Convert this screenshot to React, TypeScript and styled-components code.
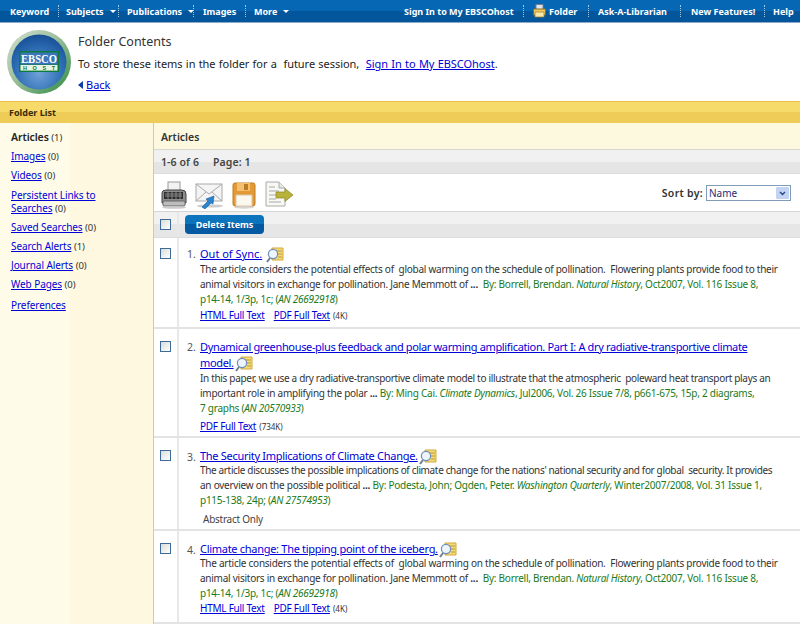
import React from "react";
import styled, { createGlobalStyle } from "styled-components";

const Global = createGlobalStyle`
  html, body { margin: 0; padding: 0; background: #fff; }
  body { font-family: "Noto Sans", "DejaVu Sans", sans-serif; font-size: 10px; color: #333; overflow: hidden; }
  a { color: #0000d8; }
`;

const Page = styled.div`width: 800px; height: 624px; overflow: hidden; display: flex; flex-direction: column;`;

const TopBar = styled.nav`
  height: 23px; flex: none; display: flex; justify-content: space-between; align-items: center;
  background: linear-gradient(#0668b4 0, #0668b4 50%, #04569c 50%, #04569c 100%);
  border-bottom: 1px solid #8fa9c4; box-sizing: border-box;
  padding: 0 6px 0 10px;
`;
const NavGroup = styled.div`display: flex; align-items: center; height: 100%;`;
const NavItem = styled.span<{ $w: number; $pl?: number }>`
  width: ${p => p.$w}px; flex: none; display: flex; align-items: center; gap: 3px;
  padding-left: ${p => p.$pl ?? 0}px;
  color: #fff; font-weight: 700; font-size: 9px; white-space: nowrap; height: 100%;
  box-sizing: border-box;
`;
const Sep = styled.i`width: 1px; height: 12px; flex: none; box-sizing: border-box; border-left: 1px dotted #a9c6df;`;
const Caret = styled.b`
  width: 0; height: 0; border: 3px solid transparent; border-top: 3px solid #fff; border-bottom: 0; margin-left: 3px;
`;

const Header = styled.header`height: 78px; flex: none; display: flex; box-sizing: border-box; padding: 6px 0 0 6px;`;
const LogoWrap = styled.div`width: 72px; flex: none;`;
const HeadText = styled.div`display: flex; flex-direction: column; font-size: 11px; color: #222; padding-top: 5px;`;
const Title = styled.h1`margin: 0; font-weight: 400; font-size: 12.5px; line-height: 16px; color: #333;`;
const Store = styled.p`margin: 6px 0 0; line-height: 16px; font-size: 11px; letter-spacing: -.04px; word-spacing: .45px;`;
const BackRow = styled.div`display: flex; align-items: center; gap: 3px; margin-top: 5px; line-height: 16px; font-size: 11px;`;
const BackArrow = styled.b`width:0;height:0;border:4px solid transparent;border-right:5px solid #0b3fa8;border-left:0;`;

const FolderBar = styled.div`
  height: 22px; flex: none; box-sizing: border-box; padding-left: 9px; display: flex; align-items: center;
  background: linear-gradient(#f7db6a 0, #f7db6a 50%, #efcb57 50%, #efcb57 100%);
  border-top: 1px solid #eebf45; font-size: 9px; font-weight: 700; color: #3a2c08;
`;
const Body = styled.div`flex: 1; display: flex; min-height: 0;`;
const Sidebar = styled.aside`
  width: 154px; flex: none; box-sizing: border-box; padding: 8px 0 0 11px; border-right: 1px solid #c9c9c2;
  background: linear-gradient(90deg, #fefce9 0, #fefce9 70px, #fff8e0 70px, #fff8e0 100%);
  font-size: 10px; letter-spacing: -.08px;
`;
const SideItem = styled.div<{ $gap?: number }>`line-height: 13px; margin-bottom: ${p => p.$gap ?? 6}px; color: #333;`;
const SideHead = styled.strong`font-size: 10.5px; color: #222; font-weight: 600;`;
const Count = styled.span`font-size: 9.5px; color: #333;`;
const Main = styled.main`flex: 1; min-width: 0; display: flex; flex-direction: column;`;
const MainHead = styled.div`
  height: 27px; flex: none; box-sizing: border-box; padding: 1px 0 0 7px; display: flex; align-items: center;
  background: #fdf9df; font-size: 10.5px; font-weight: 600; color: #333; border-bottom: 1px solid #d8d8d0;
`;
const Paging = styled.div`
  height: 24px; flex: none; box-sizing: border-box; padding-left: 7px; display: flex; align-items: center; gap: 14px;
  background: linear-gradient(#f1f1f1 50%, #e5e5e5 50%); font-weight: 600; font-size: 10.5px; color: #444;
  border-bottom: 1px solid #dcdcdc; letter-spacing: .1px;
`;
const Tools = styled.div`
  height: 38px; flex: none; box-sizing: border-box; padding: 4px 9px 0 6px; display: flex; align-items: center; justify-content: space-between;
  border-bottom: 1px solid #d4d4d4;
`;
const IconRow = styled.div`display: flex; align-items: center; gap: 8px;`;
const Sort = styled.div`display: flex; align-items: center; gap: 3px; font-size: 10.5px; font-weight: 600; color: #333; margin-top: -3px; letter-spacing: .3px;`;
const FakeSelect = styled.div`
  width: 85px; height: 16px; box-sizing: border-box; border: 1px solid #7f9db9; display: flex; align-items: center; justify-content: space-between;
  font-weight: 400; font-size: 10px; color: #2a2a70; padding: 0 1px 0 2px; background: #fff; letter-spacing: 0;
`;
const SelBtn = styled.span`
  width: 13px; height: 12px; background: #c3d3f2; display: flex; align-items: center; justify-content: center; border-radius: 1px;
`;
const ActionBar = styled.div`
  height: 26px; flex: none; box-sizing: border-box; display: flex; align-items: center;
  background: linear-gradient(#f1f1f1 50%, #e6e6e6 50%); border-bottom: 1px solid #dcdcdc;
`;
const CheckCell = styled.div<{ $center?: boolean }>`
  width: 25px; flex: none; align-self: stretch; display: flex; justify-content: center; box-sizing: border-box; border-right: 2px solid #e8e8e8;
  align-items: ${p => (p.$center ? "center" : "flex-start")};
`;
const Check = styled.span<{ $top?: number }>`
  width: 11px; height: 11px; box-sizing: border-box; border: 1px solid #3d6a99; background: linear-gradient(135deg, #dcdcd6, #fff);
  margin-top: ${p => p.$top ?? 0}px; flex: none;
`;
const DeleteBtn = styled.span`
  margin-left: 6px; width: 79px; height: 19px; border-radius: 4px; background: linear-gradient(#0b74bd 50%, #0459a3 50%);
  color: #fff; font-size: 9px; font-weight: 700; display: flex; align-items: center; justify-content: center;
`;
const Row = styled.div<{ $h: number }>`
  height: ${p => p.$h}px; flex: none; display: flex; box-sizing: border-box; border-bottom: 2px solid #e3e3e3;
`;
const Content = styled.div<{ $pad: number }>`flex: 1; padding: ${p => p.$pad}px 0 0 8px; display: flex; min-width: 0;`;
const Num = styled.span`width: 13px; flex: none; font-size: 10.5px; color: #555; line-height: 15px; margin-top: 1px;`;
const Entry = styled.div`flex: 1; min-width: 0; line-height: 15px; font-size: 10px; letter-spacing: -.25px; color: #333; white-space: nowrap;`;
const Tight = styled.span<{ $ls: number }>`letter-spacing: ${p => p.$ls}px;`;
const TitleLink = styled.a<{ $ls?: number }>`font-size: 11px; letter-spacing: ${p => p.$ls ?? -0.29}px; color: #0000d8;`;
const TitleLine = styled.div<{ $lh?: number }>`line-height: ${p => p.$lh ?? 15}px;`;
const Green = styled.span`color: #1a7a1a;`;
const Links = styled.div<{ $top?: number }>`display: flex; gap: 9px; align-items: baseline; margin-top: ${p => p.$top ?? 0}px; line-height: 15px; font-size: 10px;`;
const Size = styled.span`font-size: 8px; margin-left: -6px; color: #333; letter-spacing: 0;`;
const Plain = styled.div`margin-top: 4px; margin-left: 3px; font-size: 10px; line-height: 15px; color: #444;`;
const ZoomIcon = styled.svg<{ $ml: number }>`vertical-align: middle; margin: -3px 0 -3px ${p => p.$ml}px;`;

const Logo = () => (
  <svg width="66" height="66" viewBox="0 0 66 66">
    <defs>
      <radialGradient id="lg" cx="50%" cy="70%" r="70%">
        <stop offset="0" stopColor="#6fa2d8" />
        <stop offset="0.6" stopColor="#2f6fb5" />
        <stop offset="1" stopColor="#174f96" />
      </radialGradient>
      <linearGradient id="ring" x1="0" y1="0" x2="1" y2="1">
        <stop offset="0" stopColor="#d4e0d2" />
        <stop offset="0.45" stopColor="#9dbf9c" />
        <stop offset="1" stopColor="#2c8a3e" />
      </linearGradient>
    </defs>
    <circle cx="33" cy="33" r="32" fill="url(#ring)" />
    <circle cx="33" cy="33" r="27.5" fill="url(#lg)" />
    <rect x="13" y="22" width="40" height="21" fill="#0c7a3c" />
    <rect x="14.5" y="23.5" width="37" height="12" fill="#3a76b8" />
    <rect x="14.5" y="36" width="37" height="5.6" fill="#e9f3e4" />
    <text x="33" y="34" fontFamily="'Liberation Serif', serif" fontSize="11.5" fontWeight="700" fill="#fff" textAnchor="middle" textLength="36" lengthAdjust="spacingAndGlyphs">EBSCO</text>
    <text x="33" y="41" fontFamily="'Liberation Sans', sans-serif" fontSize="5.5" fontWeight="700" fill="#0c7a3c" textAnchor="middle" textLength="32">HOST</text>
  </svg>
);

const Printer = () => (
  <svg width="27" height="28" viewBox="0 0 27 28">
    <rect x="8" y="1" width="12" height="10" fill="#f2f2f2" stroke="#999" />
    <path d="M2 12 Q2 9 6 9 H22 Q26 9 26 13 V22 H2Z" fill="#8d8d8d" stroke="#444" />
    <rect x="4" y="11" width="19" height="7" fill="#2e2e2e" />
    <path d="M5 13h17M5 15h17M8 11v7M12 11v7M16 11v7M20 11v7" stroke="#999" strokeWidth=".8" />
    <rect x="3" y="20" width="22" height="5" rx="1" fill="#bdbdbd" stroke="#666" />
    <ellipse cx="14" cy="26.5" rx="12" ry="1.3" fill="#ccc" />
  </svg>
);
const Envelope = () => (
  <svg width="29" height="28" viewBox="0 0 29 28">
    <rect x="1" y="3" width="26" height="17" fill="#f4f4f4" stroke="#aaa" />
    <path d="M1 3 L14 13 L27 3 M1 20 L11 11 M27 20 L17 11" fill="none" stroke="#aaa" />
    <ellipse cx="15" cy="25" rx="13" ry="1.6" fill="#ccc" />
    <path d="M7 26 L13 20 L11 18 L19 15 L18 23 L16 22 L10 28Z" fill="#2c83cf" stroke="#185c9c" strokeWidth=".6" />
  </svg>
);
const Floppy = () => (
  <svg width="24" height="28" viewBox="0 0 24 28">
    <rect x="1" y="2" width="22" height="23" rx="2" fill="#e39a36" stroke="#c27c1f" />
    <rect x="5" y="2" width="13" height="8" fill="#f2c071" />
    <rect x="12" y="3" width="4" height="6" fill="#bd7a22" />
    <rect x="4" y="14" width="16" height="11" fill="#fdf8ef" stroke="#d9c7a5" />
    <ellipse cx="12" cy="26.5" rx="10" ry="1.2" fill="#d4d4d4" />
  </svg>
);
const ExportDoc = () => (
  <svg width="30" height="28" viewBox="0 0 30 28">
    <path d="M2 1 H15 L21 7 V25 H2Z" fill="#f7f7f3" stroke="#aaa" />
    <path d="M15 1 V7 H21" fill="#e8e8e2" stroke="#aaa" />
    <path d="M5 6h6M5 10h10M5 14h7M5 18h7M5 21h12" stroke="#a9a9a9" strokeWidth="1" />
    <path d="M12 11 H21 V7.5 L29 14 L21 20.5 V17 H12Z" fill="#b9b23a" stroke="#8d8820" strokeWidth=".7" />
  </svg>
);
const Mag = ({ ml = 1 }: { ml?: number }) => (
  <ZoomIcon $ml={ml} width="18" height="16" viewBox="0 0 18 16">
    <path d="M6 1 H17 V13 H6Z" fill="#f4d978" stroke="#d2a93e" />
    <path d="M9 4h7M11 7h5M12 10h4" stroke="#b08a2a" strokeWidth=".8" />
    <circle cx="7" cy="7" r="4.6" fill="#eef4fb" stroke="#6c8eb8" strokeWidth="1.2" />
    <path d="M4 11 L1 15" stroke="#6f7f93" strokeWidth="2" />
  </ZoomIcon>
);
const FolderIcon = () => (
  <svg width="13" height="14" viewBox="0 0 13 14">
    <rect x="3" y="0.5" width="7" height="5" fill="#dfe6ee" stroke="#6c7f92" />
    <path d="M0.5 5 H12.5 V11 H0.5Z" fill="#f0c95d" stroke="#8a6d1f" />
    <rect x="2" y="8" width="9" height="5" fill="#f8e7a8" stroke="#9a7d2b" strokeWidth=".7" />
  </svg>
);

const App: React.FC = () => (
  <>
    <Global />
    <Page>
      <TopBar>
        <NavGroup>
          <NavItem $w={48}>Keyword</NavItem><Sep />
          <NavItem $w={59} $pl={7}>Subjects<Caret /></NavItem><Sep />
          <NavItem $w={74} $pl={8}>Publications<Caret /></NavItem><Sep />
          <NavItem $w={51} $pl={9}>Images</NavItem><Sep />
          <NavItem $w={48} $pl={8}>More<Caret /></NavItem>
        </NavGroup>
        <NavGroup>
          <NavItem $w={120} $pl={1}>Sign In to My EBSCOhost</NavItem><Sep />
          <NavItem $w={64} $pl={9}><FolderIcon />Folder</NavItem><Sep />
          <NavItem $w={91} $pl={9}>Ask-A-Librarian</NavItem><Sep />
          <NavItem $w={83} $pl={10}>New Features!</NavItem><Sep />
          <NavItem $w={29} $pl={8}>Help</NavItem>
        </NavGroup>
      </TopBar>
      <Header>
        <LogoWrap><Logo /></LogoWrap>
        <HeadText>
          <Title>Folder Contents</Title>
          <Store>To store these items in the folder for a&nbsp; future session,&nbsp; <a href="#">Sign In to My EBSCOhost</a>.</Store>
          <BackRow><BackArrow /><a href="#">Back</a></BackRow>
        </HeadText>
      </Header>
      <FolderBar>Folder List</FolderBar>
      <Body>
        <Sidebar>
          <SideItem><SideHead>Articles</SideHead> <Count>(1)</Count></SideItem>
          <SideItem><a href="#">Images</a> <Count>(0)</Count></SideItem>
          <SideItem $gap={7}><a href="#">Videos</a> <Count>(0)</Count></SideItem>
          <SideItem><a href="#">Persistent Links to<br />Searches</a> <Count>(0)</Count></SideItem>
          <SideItem><a href="#">Saved Searches</a> <Count>(0)</Count></SideItem>
          <SideItem><a href="#">Search Alerts</a> <Count>(1)</Count></SideItem>
          <SideItem><a href="#">Journal Alerts</a> <Count>(0)</Count></SideItem>
          <SideItem $gap={8}><a href="#">Web Pages</a> <Count>(0)</Count></SideItem>
          <SideItem><a href="#">Preferences</a></SideItem>
        </Sidebar>
        <Main>
          <MainHead>Articles</MainHead>
          <Paging><span>1-6 of 6</span><span>Page: 1</span></Paging>
          <Tools>
            <IconRow><Printer /><Envelope /><Floppy /><ExportDoc /></IconRow>
            <Sort>Sort by:
              <FakeSelect>Name<SelBtn><svg width="7" height="5" viewBox="0 0 7 5"><path d="M1 1 L3.5 3.5 L6 1" fill="none" stroke="#2a4a90" strokeWidth="1.5" /></svg></SelBtn></FakeSelect>
            </Sort>
          </Tools>
          <ActionBar>
            <CheckCell $center><Check /></CheckCell>
            <DeleteBtn>Delete Items</DeleteBtn>
          </ActionBar>
          <Row $h={91}>
            <CheckCell><Check $top={10} /></CheckCell>
            <Content $pad={8}>
              <Num>1.</Num>
              <Entry>
                <TitleLine><TitleLink href="#" $ls={0}>Out of Sync.</TitleLink><Mag ml={4} /></TitleLine>
                The article considers the potential effects of&nbsp; global warming on the schedule of pollination.&nbsp; Flowering plants provide food to their<br />
                animal visitors in exchange for pollination. Jane Memmott of <b>...</b>&nbsp; <Green>By: Borrell, Brendan. <i>Natural History</i>, Oct2007, Vol. 116 Issue 8,<br />
                p14-14, 1/3p, 1c; (<i>AN 26692918</i>)</Green>
                <Links $top={1}><a href="#">HTML Full Text</a><a href="#">PDF Full Text</a><Size>(4K)</Size></Links>
              </Entry>
            </Content>
          </Row>
          <Row $h={109}>
            <CheckCell><Check $top={12} /></CheckCell>
            <Content $pad={10}>
              <Num>2.</Num>
              <Entry>
                <TitleLine $lh={16}><TitleLink href="#" $ls={-0.35}>Dynamical greenhouse-plus feedback and polar warming amplification. Part I: A dry radiative-transportive climate<br />model.</TitleLink><Mag /></TitleLine>
                <Tight $ls={-0.32}>In this paper, we use a dry radiative-transportive climate model to illustrate that the atmospheric&nbsp; poleward heat transport plays an</Tight><br />
                important role in amplifying the polar <b>...</b> <Green>By: Ming Cai. <i>Climate Dynamics</i>, Jul2006, Vol. 26 Issue 7/8, p661-675, 15p, 2 diagrams,<br />
                7 graphs (<i>AN 20570933</i>)</Green>
                <Links $top={3}><a href="#">PDF Full Text</a><Size>(734K)</Size></Links>
              </Entry>
            </Content>
          </Row>
          <Row $h={93}>
            <CheckCell><Check $top={12} /></CheckCell>
            <Content $pad={11}>
              <Num>3.</Num>
              <Entry>
                <TitleLine $lh={14}><TitleLink href="#">The Security Implications of Climate Change.</TitleLink><Mag /></TitleLine>
                <Tight $ls={-0.35}>The article discusses the possible implications of climate change for the nations' national security and for global&nbsp; security. It provides</Tight><br />
                an overview on the possible political <b>...</b> <Green>By: Podesta, John; Ogden, Peter. <i>Washington Quarterly</i>, Winter2007/2008, Vol. 31 Issue 1,<br />
                p115-138, 24p; (<i>AN 27574953</i>)</Green>
                <Plain>Abstract Only</Plain>
              </Entry>
            </Content>
          </Row>
          <Row $h={93}>
            <CheckCell><Check $top={12} /></CheckCell>
            <Content $pad={11}>
              <Num>4.</Num>
              <Entry>
                <TitleLine $lh={14}><TitleLink href="#">Climate change: The tipping point of the iceberg.</TitleLink><Mag /></TitleLine>
                The article considers the potential effects of&nbsp; global warming on the schedule of pollination.&nbsp; Flowering plants provide food to their<br />
                animal visitors in exchange for pollination. Jane Memmott of <b>...</b>&nbsp; <Green>By: Borrell, Brendan. <i>Natural History</i>, Oct2007, Vol. 116 Issue 8,<br />
                p14-14, 1/3p, 1c; (<i>AN 26692918</i>)</Green>
                <Links><a href="#">HTML Full Text</a><a href="#">PDF Full Text</a><Size>(4K)</Size></Links>
              </Entry>
            </Content>
          </Row>
        </Main>
      </Body>
    </Page>
  </>
);

export default App;
